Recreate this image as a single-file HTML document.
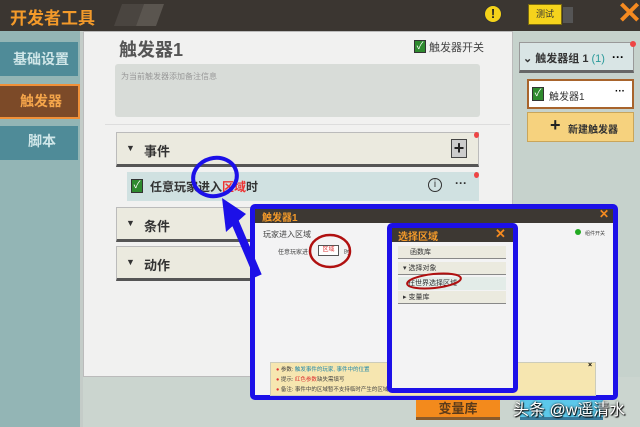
<!DOCTYPE html>
<html><head><meta charset="utf-8"><style>
*{margin:0;padding:0;box-sizing:border-box}
body{width:640px;height:427px;overflow:hidden;position:relative;background:#cbd5cf;font-family:"Liberation Sans","Noto Sans CJK SC",sans-serif}
.a{position:absolute}
.hdr{background:#ebeadf;border:1px solid #bbb;border-bottom:3px solid #555;}
.t{color:#333;font-weight:bold;font-size:13px}
.row{position:absolute;left:398px;width:108px;height:13px;background:#ebeadf;border-bottom:1px solid #888;font-size:7px;line-height:13px;color:#333}
</style></head><body>
<div class="a" style="left:0;top:0;width:640px;height:31px;background:#3b3631"></div>
<div class="a" style="left:118px;top:4px;width:22px;height:22px;background:#4a4540;transform:skewX(-20deg)"></div>
<div class="a" style="left:140px;top:4px;width:20px;height:22px;background:#5a554f;transform:skewX(-20deg)"></div>
<div class="a" style="left:10px;top:4px;color:#f39a2a;font-size:17px;font-weight:bold">开发者工具</div>
<div class="a" style="left:484px;top:5px;width:18px;height:18px;border-radius:50%;background:#f4d21a;border:1px solid #333;color:#222;font-size:13px;font-weight:bold;text-align:center;line-height:16px">!</div>
<div class="a" style="left:528px;top:4px;width:34px;height:21px;background:#f5d31c;border:1px solid #7a6a10;font-size:9px;text-align:center;line-height:19px;color:#333">测试</div>
<div class="a" style="left:563px;top:7px;width:10px;height:16px;background:#555"></div>
<div class="a" style="left:617px;top:-2px;color:#f58a20;font-size:30px;font-weight:bold;line-height:32px">✕</div>
<div class="a" style="left:0;top:31px;width:80px;height:396px;background:#93b5b5"></div>
<div class="a" style="left:80px;top:31px;width:3px;height:396px;background:#c4ccc8"></div>
<div class="a" style="left:0;top:42px;width:78px;height:34px;background:#4f8b98;color:#cfe6e8;font-size:14px;font-weight:bold;text-align:right;padding-right:9px;line-height:34px">基础设置</div>
<div class="a" style="left:0;top:84px;width:80px;height:35px;background:#7c4a28;border:2px solid #f09038;border-left:none;color:#f5a54a;font-size:14px;font-weight:bold;text-align:right;padding-right:16px;line-height:31px">触发器</div>
<div class="a" style="left:0;top:126px;width:78px;height:34px;background:#4f8b98;color:#cfe6e8;font-size:14px;font-weight:bold;text-align:right;padding-right:22px;line-height:30px">脚本</div>
<div class="a" style="left:83px;top:31px;width:430px;height:346px;background:#f1f1f0;border:1px solid #bbb"></div>
<div class="a" style="left:119px;top:36px;font-size:18px;color:#555;font-weight:bold">触发器1</div>
<div class="a" style="left:414px;top:40px;width:12px;height:13px;background:#2e8a2e;border:1px solid #333;color:#fff;font-size:10px;line-height:11px;text-align:center">✓</div>
<div class="a" style="left:429px;top:39px;font-size:11px;color:#444">触发器开关</div>
<div class="a" style="left:115px;top:64px;width:365px;height:53px;background:#d8dcd8;border-radius:3px"></div>
<div class="a" style="left:121px;top:71px;font-size:8px;color:#999">为当前触发器添加备注信息</div>
<div class="a" style="left:105px;top:124px;width:405px;height:1px;background:#ddd"></div>
<div class="a hdr" style="left:116px;top:132px;width:363px;height:35px"></div>
<div class="a" style="left:126px;top:143px;font-size:9px;color:#333">▼</div>
<div class="a t" style="left:144px;top:141px">事件</div>
<div class="a" style="left:451px;top:139px;width:16px;height:19px;background:#ccc;border:1px solid #444;font-size:18px;font-weight:bold;line-height:16px;text-align:center;color:#222">+</div>
<div class="a" style="left:474px;top:132px;width:5px;height:6px;background:#e44;border-radius:50%"></div>
<div class="a" style="left:127px;top:172px;width:352px;height:29px;background:#d0e1e1"></div>
<div class="a" style="left:131px;top:179px;width:12px;height:14px;background:#2e8a2e;border:1px solid #333;color:#fff;font-size:10px;line-height:12px;text-align:center">✓</div>
<div class="a" style="left:150px;top:178px;font-size:12px;color:#333;font-weight:bold">任意玩家进入<span style="color:#e33">区域</span>时</div>
<div class="a" style="left:428px;top:178px;width:14px;height:14px;border:1px solid #333;border-radius:50%;font-size:10px;text-align:center;line-height:12px;color:#333">i</div>
<div class="a" style="left:455px;top:176px;font-size:12px;font-weight:bold;color:#333">···</div>
<div class="a" style="left:474px;top:172px;width:5px;height:6px;background:#e44;border-radius:50%"></div>
<div class="a hdr" style="left:116px;top:207px;width:363px;height:35px"></div>
<div class="a" style="left:126px;top:218px;font-size:9px;color:#333">▼</div>
<div class="a t" style="left:144px;top:216px">条件</div>
<div class="a hdr" style="left:116px;top:246px;width:363px;height:35px"></div>
<div class="a" style="left:126px;top:257px;font-size:9px;color:#333">▼</div>
<div class="a t" style="left:144px;top:255px">动作</div>
<div class="a" style="left:513px;top:31px;width:127px;height:346px;background:#c6d2cc"></div>
<div class="a" style="left:519px;top:42px;width:115px;height:31px;background:#d9e5e5;border:1px solid #999;border-bottom:3px solid #666"></div>
<div class="a" style="left:523px;top:50px;font-size:11px;color:#333;font-weight:bold">⌄ 触发器组 1 <span style="color:#2a9a9a;font-weight:normal">(1)</span></div>
<div class="a" style="left:612px;top:50px;font-size:12px;font-weight:bold">···</div>
<div class="a" style="left:630px;top:41px;width:6px;height:6px;background:#e44;border-radius:50%"></div>
<div class="a" style="left:527px;top:79px;width:107px;height:30px;background:#fff;border:2px solid #a8642c"></div>
<div class="a" style="left:532px;top:87px;width:12px;height:14px;background:#2e8a2e;border:1px solid #333;color:#fff;font-size:10px;line-height:12px;text-align:center">✓</div>
<div class="a" style="left:549px;top:88px;font-size:10px;color:#333">触发器1</div>
<div class="a" style="left:615px;top:86px;font-size:10px;font-weight:bold">···</div>
<div class="a" style="left:527px;top:112px;width:107px;height:30px;background:#f6d27e;border:1px solid #c9a55a"></div>
<div class="a" style="left:550px;top:115px;font-size:18px;font-weight:bold;color:#222">+</div>
<div class="a" style="left:568px;top:121px;font-size:10px;color:#333;font-weight:bold">新建触发器</div>
<div class="a" style="left:416px;top:398px;width:84px;height:22px;background:#f38a1c;border-bottom:3px solid #8a5a2a;text-align:center;font-size:13px;color:#5a3a1a;font-weight:bold;line-height:22px">变量库</div>
<div class="a" style="left:520px;top:398px;width:83px;height:22px;background:#5cc8ea;border-bottom:3px solid #3a7a9a"></div>
<div class="a" style="left:250px;top:204px;width:368px;height:196px;border:5px solid #1c10e8;border-radius:5px;background:#f3f3f4"></div>
<div class="a" style="left:255px;top:209px;width:358px;height:14px;background:#3d3833"></div>
<div class="a" style="left:262px;top:209px;font-size:10px;color:#f39a2a;font-weight:bold">触发器1</div>
<div class="a" style="left:599px;top:207px;font-size:12px;color:#f58a20;font-weight:bold">✕</div>
<div class="a" style="left:263px;top:229px;font-size:8px;color:#444">玩家进入区域</div>
<div class="a" style="left:278px;top:247px;font-size:6px;color:#444">任意玩家进</div>
<div class="a" style="left:318px;top:245px;width:21px;height:11px;background:#fff;border:1px solid #555;font-size:6px;color:#d33;text-align:center;line-height:9px">区域</div>
<div class="a" style="left:344px;top:247px;font-size:6px;color:#444">时</div>
<div class="a" style="left:575px;top:229px;width:6px;height:6px;border-radius:50%;background:#2a2"></div>
<div class="a" style="left:585px;top:230px;font-size:5px;color:#444">组件开关</div>
<div class="a" style="left:270px;top:362px;width:326px;height:34px;background:#f6e6b0;border:1px solid #ccb"></div>
<div class="a" style="left:276px;top:365px;font-size:5.5px;line-height:10px;color:#444"><span style="color:#d33">●</span> 参数: <span style="color:#28a">触发事件的玩家, 事件中的位置</span><br><span style="color:#d33">●</span> 提示: <span style="color:#d33">红色参数</span>缺失需填写<br><span style="color:#d33">●</span> 备注: 事件中的区域暂不支持临时产生的区域</div>
<div class="a" style="left:588px;top:362px;font-size:7px;font-weight:bold">×</div>
<div class="a" style="left:387px;top:223px;width:131px;height:170px;border:5px solid #1c10e8;border-radius:5px;background:#f3f3f4"></div>
<div class="a" style="left:392px;top:228px;width:121px;height:14px;background:#3d3833"></div>
<div class="a" style="left:398px;top:228px;font-size:10px;color:#f39a2a;font-weight:bold">选择区域</div>
<div class="a" style="left:495px;top:226px;font-size:13px;color:#f58a20;font-weight:bold">✕</div>
<div class="row" style="top:246px;padding-left:12px">函数库</div>
<div class="row" style="top:262px;padding-left:5px">▾ 选择对象</div>
<div class="row" style="top:277px;padding-left:10px;background:#e3ece8;border:none">在世界选择区域</div>
<div class="row" style="top:291px;padding-left:5px">▸ 变量库</div>
<svg class="a" style="left:0;top:0" width="640" height="427">
<ellipse cx="215" cy="177" rx="22" ry="19" fill="none" stroke="#1c10e8" stroke-width="4" transform="rotate(-15 215 177)"/>
<path d="M232 215 L258 276" stroke="#1c10e8" stroke-width="8"/>
<path d="M222 198 L246 214 L226 232 Z" fill="#1c10e8"/>
<ellipse cx="330" cy="251" rx="20" ry="16" fill="none" stroke="#b01010" stroke-width="2.5"/>
<ellipse cx="434" cy="281" rx="27" ry="7" fill="none" stroke="#b01010" stroke-width="2" transform="rotate(-6 434 281)"/>
</svg>
<div class="a" style="left:513px;top:396px;font-size:16px;color:#fff;text-shadow:0 0 2px #000,1px 1px 1px #000">头条 @w遥清水</div>
</body></html>
